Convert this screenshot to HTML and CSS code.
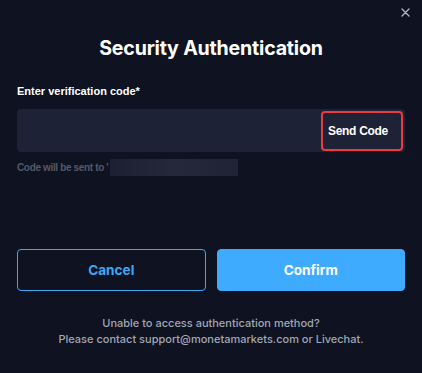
FILE: index.html
```html
<!DOCTYPE html>
<html>
<head>
<meta charset="utf-8">
<link rel="stylesheet" href="styles.css">
</head>
<body>
<div class="modal">
  <button class="close" aria-label="Close">
    <svg width="9" height="9" viewBox="0 0 9 9"><path d="M1 1L8 8M8 1L1 8" stroke="#b4b8c6" stroke-width="1.3" stroke-linecap="round"/></svg>
  </button>
  <h1 class="title">Security Authentication</h1>
  <label class="label">Enter verification code*</label>
  <div class="input">
    <span class="send">Send Code</span>
  </div>
  <div class="hint"><span>Code will be sent to '</span><span class="masked"></span></div>
  <div class="actions">
    <button class="btn cancel">Cancel</button>
    <button class="btn confirm">Confirm</button>
  </div>
  <p class="footer">Unable to access authentication method?<br>Please contact support@monetamarkets.com or Livechat.</p>
</div>
</body>
</html>
```
FILE: styles.css
```css
html, body {
  margin: 0;
  padding: 0;
  background: #0e1221;
}
body {
  width: 422px;
  height: 373px;
  overflow: hidden;
  font-family: Inter, "Liberation Sans", sans-serif;
}
.modal {
  position: relative;
  box-sizing: border-box;
  width: 422px;
  height: 373px;
  padding: 0 17px;
  display: flex;
  flex-direction: column;
}
.close {
  position: absolute;
  top: 7px;
  right: 11px;
  width: 11px;
  height: 11px;
  padding: 1px;
  border: 0;
  background: none;
  display: flex;
}
.title {
  margin: 35px 0 0;
  height: 26px;
  line-height: 26px;
  text-align: center;
  font-size: 19.6px;
  font-weight: 700;
  color: #ffffff;
  letter-spacing: -0.2px;
}
.label {
  margin-top: 23px;
  font-family: "Liberation Sans", Arial, sans-serif;
  font-size: 11px;
  line-height: 14px;
  font-weight: 700;
  color: #ffffff;
}
.input {
  margin-top: 11px;
  height: 43px;
  background: #1e2237;
  border-radius: 4px;
  display: flex;
  align-items: center;
  justify-content: flex-end;
  padding-right: 2px;
}
.send {
  box-sizing: border-box;
  width: 82px;
  height: 40px;
  border: 2px solid #ec3a3e;
  border-radius: 4px;
  padding-left: 5px;
  display: flex;
  align-items: center;
  font-family: "Liberation Sans", Arial, sans-serif;
  font-size: 12px;
  font-weight: 700;
  color: #ffffff;
  letter-spacing: -0.3px;
}
.hint {
  margin-top: 7px;
  display: flex;
  align-items: center;
  height: 17px;
  font-family: "Liberation Sans", Arial, sans-serif;
  font-size: 10px;
  font-weight: 700;
  letter-spacing: -0.35px;
  color: #545969;
}
.masked {
  width: 128px;
  height: 17px;
  margin-left: 2px;
  background: linear-gradient(90deg, #1c2032, #24283a 50%, #1f2335);
}
.actions {
  margin-top: 73px;
  display: flex;
  gap: 11px;
}
.btn {
  flex: 1;
  height: 42px;
  border-radius: 4px;
  font-family: Inter, "Liberation Sans", sans-serif;
  font-size: 13.6px;
  font-weight: 700;
}
.cancel {
  background: transparent;
  border: 1px solid #3ea8f3;
  color: #3ea8f3;
}
.confirm {
  background: #3eabff;
  border: 1px solid #3eabff;
  color: #ffffff;
}
.footer {
  margin: 24px 0 0;
  text-align: center;
  font-size: 11px;
  line-height: 16px;
  font-weight: 500;
  color: #a3a7b3;
}
```
